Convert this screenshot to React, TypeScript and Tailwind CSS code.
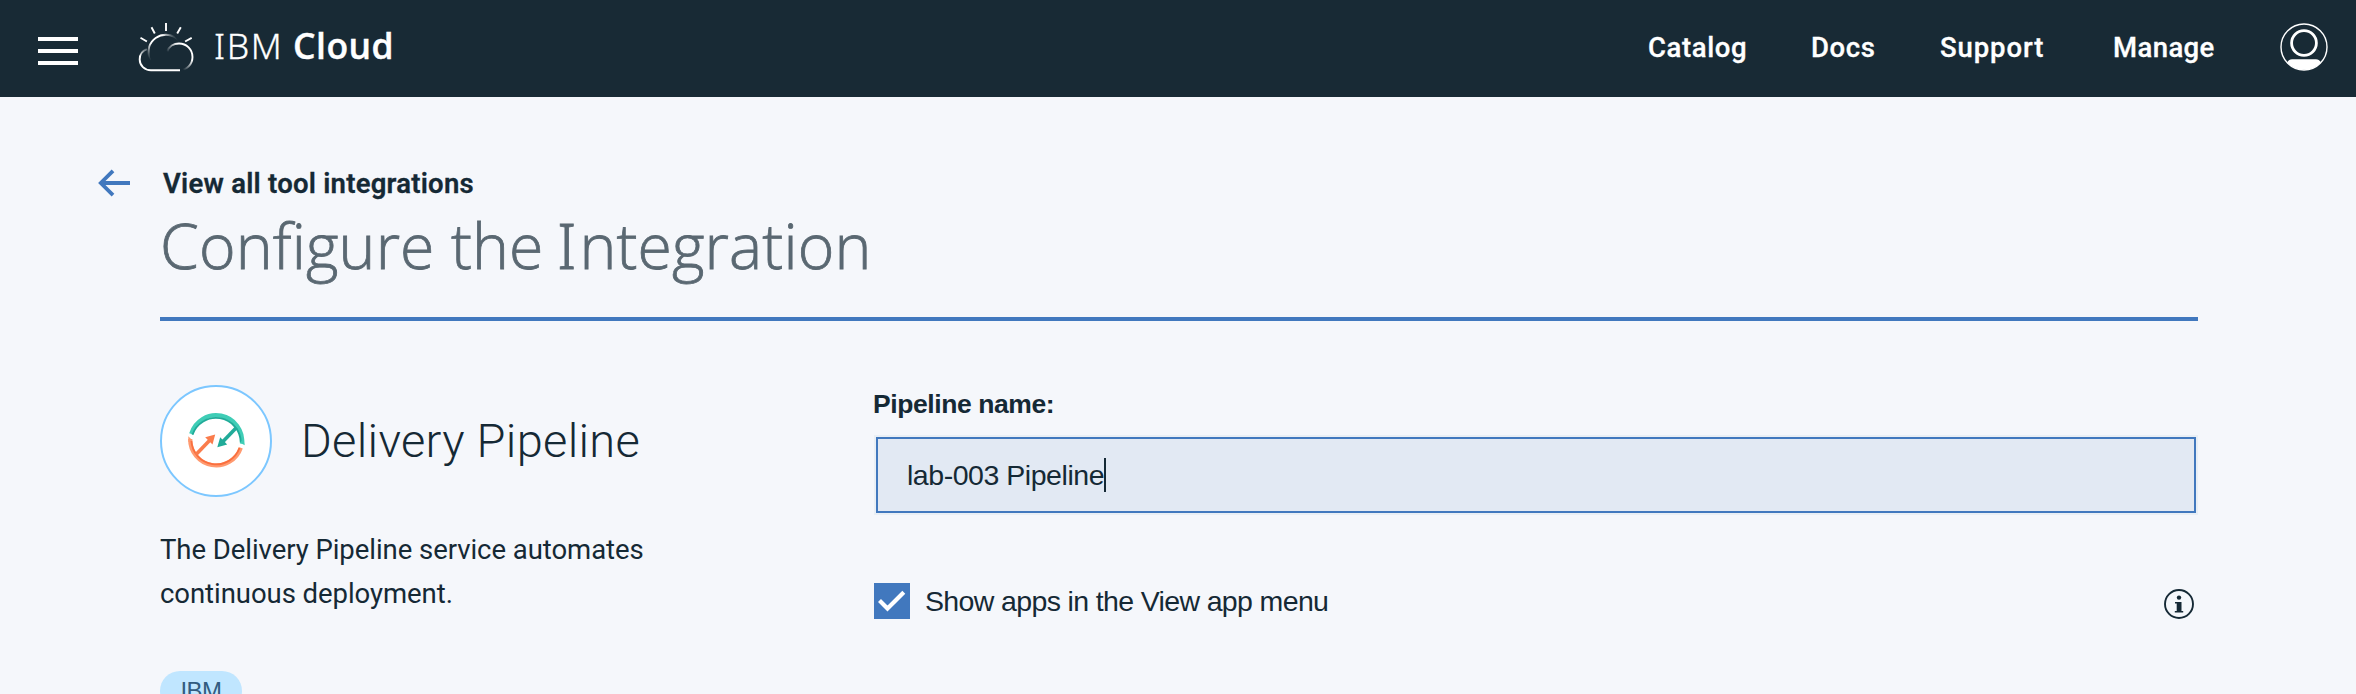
import React from "react";

function CloudLogo() {
  return (
    <svg className="mt-[20px] ml-[58px] h-[54px] w-[60px] shrink-0" viewBox="136 20 60 54" fill="none" stroke="#fff">
      <defs>
        <linearGradient id="fadeSun" gradientUnits="userSpaceOnUse" x1="150" y1="60" x2="178" y2="40">
          <stop offset="0" stopColor="#fff" stopOpacity="0" />
          <stop offset="0.3" stopColor="#fff" />
          <stop offset="0.7" stopColor="#fff" />
          <stop offset="1" stopColor="#fff" stopOpacity="0" />
        </linearGradient>
        <linearGradient id="fadeCloud" gradientUnits="userSpaceOnUse" x1="167" y1="52" x2="177" y2="43">
          <stop offset="0" stopColor="#fff" stopOpacity="0" />
          <stop offset="1" stopColor="#fff" />
        </linearGradient>
        <linearGradient id="fadeLeft" gradientUnits="userSpaceOnUse" x1="147" y1="48" x2="147" y2="56">
          <stop offset="0" stopColor="#fff" stopOpacity="0.2" />
          <stop offset="1" stopColor="#fff" />
        </linearGradient>
      </defs>
      <path d="M166 23v8M151.500 27.300l3.300 6.200M180.800 27.300l-3.600 6.200M140.500 37.800l6.400 3.700M191.700 37.800l-6.600 3.700" strokeWidth="1.900" />
      <path d="M150 60.500C148 55 148.300 50.500 149.200 46.800C151.500 39.500 158.500 34.700 166 34.700C172 34.700 177 37.500 180 41.800" stroke="url(#fadeSun)" strokeWidth="1.900" />
      <path d="M167.300 51.500C169 46.500 173.800 43.500 179 43.500C186.500 43.500 192.500 49.500 192.500 57C192.500 64.500 186.500 70.200 179.500 70.200" stroke="url(#fadeCloud)" strokeWidth="1.900" />
      <path d="M180 70.200H151C144.500 70.200 139.700 65.500 139.700 59.500C139.700 55 142 51 146.800 49.200" stroke="url(#fadeLeft)" strokeWidth="1.900" />
    </svg>
  );
}

function Avatar() {
  return (
    <svg className="mt-[22px] ml-auto h-[50px] w-[50px]" viewBox="0 0 50 50" fill="none" stroke="#fff">
      <circle cx="25" cy="25" r="23" strokeWidth="1.400" />
      <circle cx="25" cy="21" r="12.400" strokeWidth="2.800" />
      <path d="M8 40.500C9.500 38.300 10.800 37.200 13 37.200H37C39.200 37.200 40.500 38.300 42 40.500A23.500 23.500 0 0 1 8 40.500Z" fill="#fff" stroke="none" />
    </svg>
  );
}

function PipelineIcon() {
  return (
    <svg className="h-[112px] w-[112px] shrink-0" viewBox="0 0 112 112" fill="none">
      <circle cx="56" cy="56" r="55" fill="#fff" stroke="#7cc7ff" strokeWidth="2" />
      <path d="M31.200 48.800A26 26 0 0 1 82 58.800" stroke="#3fcdb6" strokeWidth="4.200" />
      <path d="M32.500 49.800A24.800 24.800 0 0 1 80.800 57.500" stroke="#21ab99" strokeWidth="1.800" />
      <path d="M84.700 60.300L79.900 57.500L84 54Z" fill="#3fcdb6" />
      <path d="M30.200 54A26 26 0 0 0 80.800 62.800" stroke="#ff9a70" strokeWidth="4.200" />
      <path d="M31.400 56A24.800 24.800 0 0 0 79.500 63" stroke="#fa6f3e" strokeWidth="1.800" />
      <path d="M28.300 51.300L32.400 55.200L28.300 57Z" fill="#ff9a70" />
      <path d="M76.500 42.500L62.500 57" stroke="#21ab99" strokeWidth="3.600" />
      <path d="M57.300 62.300L60.200 52.300L67.200 59.600Z" fill="#21ab99" />
      <path d="M36 69.500L50 55" stroke="#fa7c4c" strokeWidth="3.600" />
      <path d="M55.200 49.600L45.200 52.300L52.500 59.600Z" fill="#fa7c4c" />
    </svg>
  );
}

function InfoIcon() {
  return (
    <svg className="mt-[6px] mr-[4px] ml-auto h-[30px] w-[30px]" viewBox="0 0 30 30">
      <circle cx="15" cy="15" r="14" fill="none" stroke="#152935" strokeWidth="1.900" />
      <circle cx="15" cy="8.600" r="2.200" fill="#152935" />
      <path d="M11 13H17.500V22H19.200V23.500H10.800V22H12.700V14.600H11Z" fill="#152935" />
    </svg>
  );
}

export default function App() {
  return (
    <div className="h-[694px] w-[2356px] overflow-hidden bg-[#f5f7fb] font-['Roboto',sans-serif] text-[#152935]">
      <header className="flex h-[97px] items-start bg-[#182a35] pr-[27px] pl-[38px] text-white">
        <button className="mt-[37px] flex w-[40px] flex-col gap-2">
          <span className="h-1 bg-white" />
          <span className="h-1 bg-white" />
          <span className="h-1 bg-white" />
        </button>
        <CloudLogo />
        <div className="mt-[27px] ml-[18px] flex text-[35.5px] leading-9 whitespace-nowrap">
          <span className="w-[79px] font-['Noto_Sans',sans-serif] font-light tracking-[1.6px] [-webkit-text-stroke:0.3px_#fff]">IBM</span>
          <span className="font-['Open_Sans',sans-serif] font-semibold tracking-[0.5px] [-webkit-text-stroke:0.4px_#fff]">Cloud</span>
        </div>
        <nav className="mt-[30px] ml-auto flex text-[27.5px] leading-9 font-medium tracking-[0.6px] [-webkit-text-stroke:0.3px_#fff]">
          <a className="w-[163px]">Catalog</a>
          <a className="w-[129px]">Docs</a>
          <a className="w-[173px] tracking-[0.9px]">Support</a>
          <a className="w-[166px] tracking-[0.4px]">Manage</a>
        </nav>
        <div className="flex">
          <Avatar />
        </div>
      </header>

      <main className="pt-[66px] pr-[158px] pl-[160px]">
        <div className="-ml-[62px] flex h-10 items-center">
          <svg className="h-[28px] w-[33px]" viewBox="0 0 33 28" fill="none" stroke="#4178be" strokeWidth="3.800">
            <path d="M32 14H3M15 1.800L2.800 14L15 26.200" />
          </svg>
          <span className="ml-[32px] pt-px text-[27.5px] leading-10 font-semibold tracking-[0.24px] [-webkit-text-stroke:0.3px_#152935]">View all tool integrations</span>
        </div>
        <h1 className="font-['Open_Sans',sans-serif] text-[62.5px] leading-[84px] font-light tracking-[0.15px] whitespace-nowrap text-[#5a6872] [-webkit-text-stroke:0.8px_#5a6872]">
          Configure the <span className="-ml-[3px] font-['Noto_Sans',sans-serif] tracking-[3px]">I</span>ntegration
        </h1>
        <div className="mt-[30px] h-1 bg-[#4178be]" />

        <div className="mt-16 flex">
          <section className="w-[714px] shrink-0">
            <div className="flex items-center">
              <PipelineIcon />
              <h2 className="ml-[29px] text-[47px] leading-[56px] font-light tracking-[0.3px]">Delivery Pipeline</h2>
            </div>
            <p className="mt-[31px] w-[520px] text-[27.5px] leading-[44px] tracking-[-0.05px]">
              The Delivery Pipeline service automates continuous deployment.
            </p>
            <span className="mt-[55px] flex h-10 w-[82px] justify-center rounded-full bg-[#c0e6ff] font-['Liberation_Sans',sans-serif] text-[24px] leading-10 tracking-[-0.5px] text-[#325c80]">
              IBM
            </span>
          </section>

          <section className="flex-1 font-['Liberation_Sans',sans-serif] text-[28.5px]">
            <label className="-ml-px block text-[26.5px] leading-[38px] font-bold tracking-[-0.42px]">Pipeline name:</label>
            <div className="mt-3 h-20 bg-[#e9eff5] p-[2px]">
              <div className="flex h-full items-center border-2 border-[#4178be] bg-[#e2e9f3] pl-[29px]">
                <span className="tracking-[-0.46px]">lab-003 Pipeline</span>
                <span className="h-[34px] w-[2px] bg-[#152935]" />
              </div>
            </div>
            <div className="mt-[68px] flex h-9 items-start">
              <svg className="h-9 w-9 bg-[#4178be]" viewBox="0 0 36 36" fill="none" stroke="#fff" strokeWidth="4.200">
                <path d="M5.500 17.500L13.500 25.500L29.800 9.300" />
              </svg>
              <span className="ml-[15px] leading-9 tracking-[-0.64px]">Show apps in the View app menu</span>
              <InfoIcon />
            </div>
          </section>
        </div>
      </main>
    </div>
  );
}
